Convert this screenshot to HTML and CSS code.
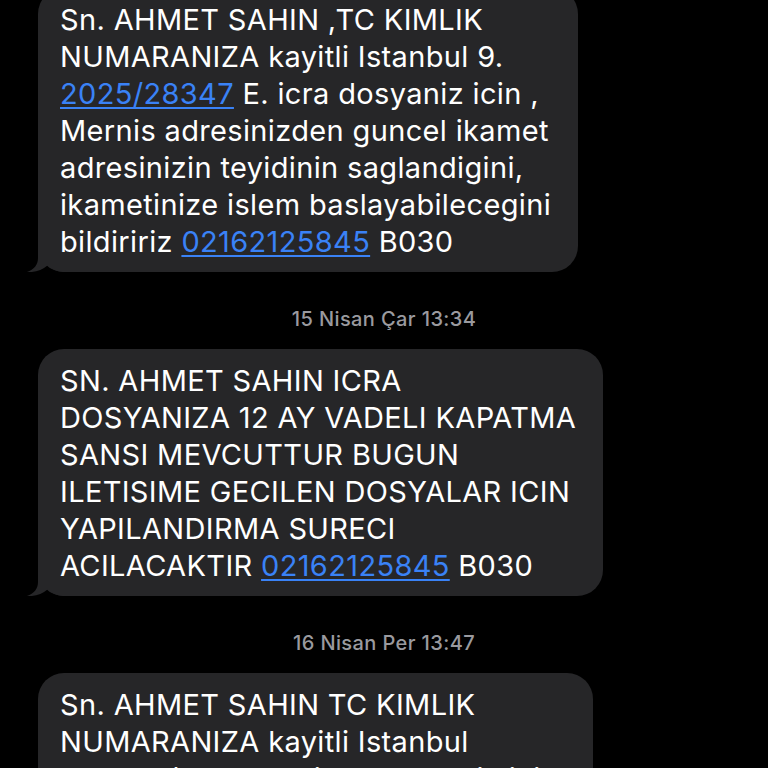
FILE: index.html
```html
<!DOCTYPE html>
<html lang="tr">
<head>
<meta charset="utf-8">
<link rel="stylesheet" href="styles.css">
</head>
<body>
<div class="thread">
  <div class="bubble b1">
    <svg class="tail" viewBox="0 0 40 26" width="40" height="26"><path d="M12,0 L12,12 C12,19 8,23.5 1,26 C9,26.6 16,24.2 21.5,19.5 C26,23.5 32,26 40,26 L40,0 Z"/></svg>
    <p class="msg">Sn. AHMET SAHIN ,TC KIMLIK<br>NUMARANIZA kayitli Istanbul 9.<br><a class="link">2025/28347</a> E. icra dosyaniz icin ,<br>Mernis adresinizden guncel ikamet<br>adresinizin teyidinin saglandigini,<br>ikametinize islem baslayabilecegini<br>bildiririz <a class="link">02162125845</a> B030</p>
  </div>
  <div class="stamp">15 Nisan Çar 13:34</div>
  <div class="bubble b2">
    <svg class="tail" viewBox="0 0 40 26" width="40" height="26"><path d="M12,0 L12,12 C12,19 8,23.5 1,26 C9,26.6 16,24.2 21.5,19.5 C26,23.5 32,26 40,26 L40,0 Z"/></svg>
    <p class="msg">SN. AHMET SAHIN ICRA<br>DOSYANIZA 12 AY VADELI KAPATMA<br>SANSI MEVCUTTUR BUGUN<br>ILETISIME GECILEN DOSYALAR ICIN<br>YAPILANDIRMA SURECI<br>ACILACAKTIR <a class="link">02162125845</a> B030</p>
  </div>
  <div class="stamp">16 Nisan Per 13:47</div>
  <div class="bubble b3">
    <p class="msg">Sn. AHMET SAHIN TC KIMLIK<br>NUMARANIZA kayitli Istanbul<br>9. 2025/28348 E. icra dosyaniz icin ,<br>Mernis adresinizden guncel ikamet</p>
  </div>
</div>
</body>
</html>
```

FILE: styles.css
```css
html, body {
  margin: 0;
  padding: 0;
  background: #000;
  height: 768px;
  overflow: hidden;
}
.thread {
  display: flex;
  flex-direction: column;
  align-items: flex-start;
  padding-left: 38px;
  margin-top: -12px;
  font-family: Inter, "Liberation Sans", Arial, sans-serif;
}
.bubble {
  position: relative;
  background: #262628;
  border-radius: 26px;
  padding: 13px 0 12px 22px;
  box-sizing: border-box;
}
.b1 { width: 540px; }
.b2 { width: 565px; }
.b3 { width: 555px; }
.msg {
  position: relative;
  margin: 0;
  color: #fff;
  font-size: 29px;
  letter-spacing: 0.35px;
  line-height: 37px;
  white-space: nowrap;
}
.link {
  color: #3a82f6;
  text-decoration: underline;
  text-decoration-thickness: 2px;
  text-underline-offset: 3px;
}
.tail {
  position: absolute;
  left: -12px;
  bottom: 0;
  fill: #262628;
  display: block;
}
.stamp {
  align-self: stretch;
  margin-left: -38px;
  margin-top: 37px;
  margin-bottom: 20px;
  text-align: center;
  color: #9a9a9f;
  font-size: 20px;
  font-weight: 500;
  letter-spacing: 0.4px;
  line-height: 20px;
}
```
